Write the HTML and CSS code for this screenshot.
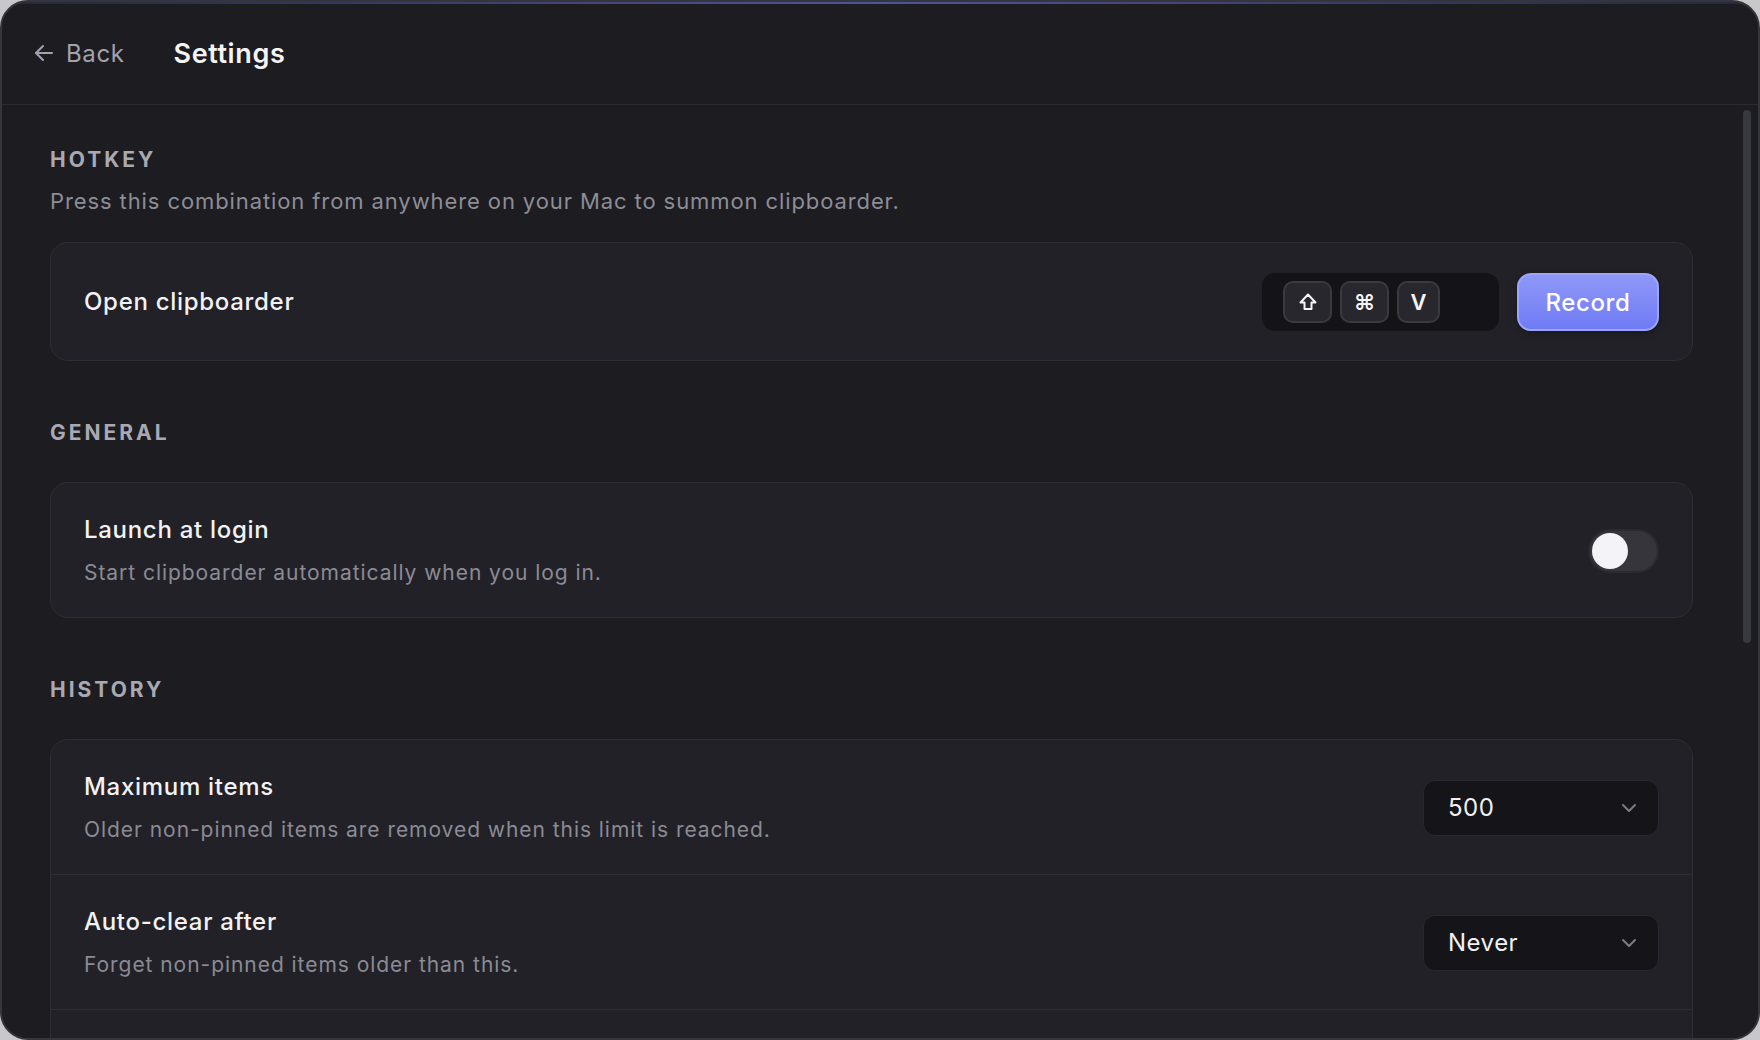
FILE: index.html
```html
<html lang="en">
<head>
    <meta charset="UTF-8">
    <meta name="viewport" content="width=device-width, initial-scale=1.0">
    <title>Settings</title>
    <link rel="stylesheet" href="styles.css">
</head>
<body>
    <div class="window">
        <div class="header">
            <button type="button" class="backBtn">
                <svg width="20" height="18" viewBox="0 0 20 18" fill="none" stroke="currentColor" stroke-width="2" stroke-linecap="round" stroke-linejoin="round">
                    <path d="M18 9H2"/>
                    <path d="M9 2L2 9l7 7"/>
                </svg>
                Back
            </button>
            <h1 class="title">Settings</h1>
        </div>

        <div class="main">
            <div class="content">
                <h2 class="sectionTitle">HOTKEY</h2>
                <p class="sectionDesc">Press this combination from anywhere on your Mac to summon clipboarder.</p>
                <div class="card">
                    <div class="row rowCompact">
                        <div class="rowText">
                            <p class="rowTitle">Open clipboarder</p>
                        </div>
                        <div class="hotkey">
                            <div class="keys">
                                <span class="key">
                                    <svg width="20" height="20" viewBox="0 0 20 20" fill="none" stroke="currentColor" stroke-width="2" stroke-linejoin="round">
                                        <path d="M10 2.5L2.5 10.5H6.5V17H13.5V10.5H17.5Z"/>
                                    </svg>
                                </span>
                                <span class="key">&#8984;</span>
                                <span class="key keyNarrow">V</span>
                            </div>
                            <button type="button" class="recordBtn">Record</button>
                        </div>
                    </div>
                </div>

                <h2 class="sectionTitle sectionGap">GENERAL</h2>
                <div class="card">
                    <div class="row">
                        <div class="rowText">
                            <p class="rowTitle">Launch at login</p>
                            <p class="rowDesc">Start clipboarder automatically when you log in.</p>
                        </div>
                        <div class="toggle"><span class="knob"></span></div>
                    </div>
                </div>

                <h2 class="sectionTitle sectionGap">HISTORY</h2>
                <div class="card">
                    <div class="row">
                        <div class="rowText">
                            <p class="rowTitle">Maximum items</p>
                            <p class="rowDesc">Older non-pinned items are removed when this limit is reached.</p>
                        </div>
                        <div class="select">
                            <span>500</span>
                            <svg width="16" height="10" viewBox="0 0 16 10" fill="none" stroke="currentColor" stroke-width="2" stroke-linecap="round" stroke-linejoin="round">
                                <path d="M2 2l6 6 6-6"/>
                            </svg>
                        </div>
                    </div>
                    <div class="row">
                        <div class="rowText">
                            <p class="rowTitle">Auto-clear after</p>
                            <p class="rowDesc">Forget non-pinned items older than this.</p>
                        </div>
                        <div class="select">
                            <span>Never</span>
                            <svg width="16" height="10" viewBox="0 0 16 10" fill="none" stroke="currentColor" stroke-width="2" stroke-linecap="round" stroke-linejoin="round">
                                <path d="M2 2l6 6 6-6"/>
                            </svg>
                        </div>
                    </div>
                    <div class="row rowEmpty"></div>
                </div>
            </div>

            <div class="scrollbar">
                <div class="thumb"></div>
            </div>
        </div>
    </div>
</body>
</html>
```

FILE: styles.css
```css
body {
  margin: 0;
  background-color: #c8c8cb;
  font-family: "Inter", "Noto Sans", sans-serif;
  overflow: hidden;
}

p, h1, h2 {
  margin: 0;
}

.window {
  box-sizing: border-box;
  width: 1760px;
  height: 1040px;
  border: 2px solid #35353c;
  border-radius: 28px;
  background: linear-gradient(90deg, rgba(80, 84, 150, 0.2), #50559a 50%, rgba(80, 84, 150, 0.2)) top / 100% 2px no-repeat, #1c1c21;
  overflow: hidden;
  display: flex;
  flex-direction: column;
}

.header {
  height: 102px;
  flex-shrink: 0;
  border-bottom: 1px solid #2b2b31;
  display: flex;
  align-items: center;
  padding-left: 32px;
}

.backBtn {
  display: flex;
  align-items: center;
  gap: 12px;
  border: none;
  background: none;
  padding: 0;
  font-family: inherit;
  font-size: 24px;
  letter-spacing: 0.6px;
  color: #a3a3ad;
  cursor: pointer;
}

.title {
  margin-left: 49px;
  font-size: 27px;
  font-weight: 600;
  letter-spacing: 0.6px;
  color: #f4f4f7;
}

.main {
  flex: 1;
  display: flex;
  min-height: 0;
}

.content {
  flex: 1;
  padding: 42px 0 0 48px;
}

.sectionTitle {
  font-size: 21px;
  line-height: 25px;
  font-weight: 700;
  letter-spacing: 3px;
  color: #a9a9b3;
}

.sectionGap {
  margin-top: 59px;
  margin-bottom: 37px;
}

.sectionDesc {
  margin-top: 16px;
  margin-bottom: 27px;
  font-size: 22px;
  line-height: 27px;
  letter-spacing: 0.9px;
  color: #8d8d97;
}

.card {
  background-color: #212127;
  border: 1px solid #2e2e35;
  border-radius: 18px;
}

.row {
  display: flex;
  align-items: center;
  justify-content: space-between;
  padding: 32px 33px 31px 33px;
  border-bottom: 1px solid #2e2e35;
}

.row:last-child {
  border-bottom: none;
}

.rowCompact {
  padding-top: 30px;
  padding-bottom: 29px;
}

.rowEmpty {
  height: 80px;
}

.rowTitle {
  font-size: 24px;
  line-height: 30px;
  font-weight: 500;
  letter-spacing: 0.7px;
  color: #f2f2f5;
}

.rowDesc {
  margin-top: 15px;
  font-size: 21px;
  line-height: 26px;
  letter-spacing: 0.95px;
  color: #8b8b95;
}

.hotkey {
  display: flex;
  align-items: center;
  gap: 18px;
}

.keys {
  box-sizing: border-box;
  width: 237px;
  height: 58px;
  padding-left: 21px;
  border-radius: 13px;
  background-color: #141418;
  display: flex;
  align-items: center;
  gap: 8px;
}

.key {
  box-sizing: border-box;
  width: 49px;
  height: 42px;
  border: 2px solid #3a3a41;
  border-radius: 10px;
  background-color: #27272d;
  color: #f4f4f7;
  font-size: 22px;
  font-weight: 600;
  display: flex;
  align-items: center;
  justify-content: center;
}

.keyNarrow {
  width: 43px;
}

.recordBtn {
  box-sizing: border-box;
  width: 142px;
  height: 58px;
  border: 2px solid #9ca4fb;
  border-radius: 14px;
  background: linear-gradient(180deg, #8e98f8, #6f7bf4);
  font-family: inherit;
  font-size: 24px;
  font-weight: 500;
  letter-spacing: 0.6px;
  color: #ffffff;
  box-shadow: 0 2px 6px rgba(0, 0, 0, 0.35);
  cursor: pointer;
}

.toggle {
  box-sizing: border-box;
  width: 71px;
  height: 44px;
  border: 2px solid #2a2a30;
  border-radius: 22px;
  background-color: #36353c;
  display: flex;
  align-items: center;
  padding-left: 2px;
}

.knob {
  width: 36px;
  height: 36px;
  border-radius: 50%;
  background-color: #f3f3f8;
}

.select {
  box-sizing: border-box;
  width: 236px;
  height: 56px;
  padding: 0 21px 0 24px;
  border: 1px solid #28282e;
  border-radius: 12px;
  background-color: #151519;
  display: flex;
  align-items: center;
  justify-content: space-between;
  font-size: 24px;
  letter-spacing: 0.5px;
  color: #f0f0f4;
}

.select svg {
  color: #7c7c86;
}

.scrollbar {
  width: 65px;
  flex-shrink: 0;
  padding: 5px 0 0 50px;
  box-sizing: border-box;
}

.thumb {
  width: 8px;
  height: 533px;
  border-radius: 4px;
  background-color: #38383f;
}
```
